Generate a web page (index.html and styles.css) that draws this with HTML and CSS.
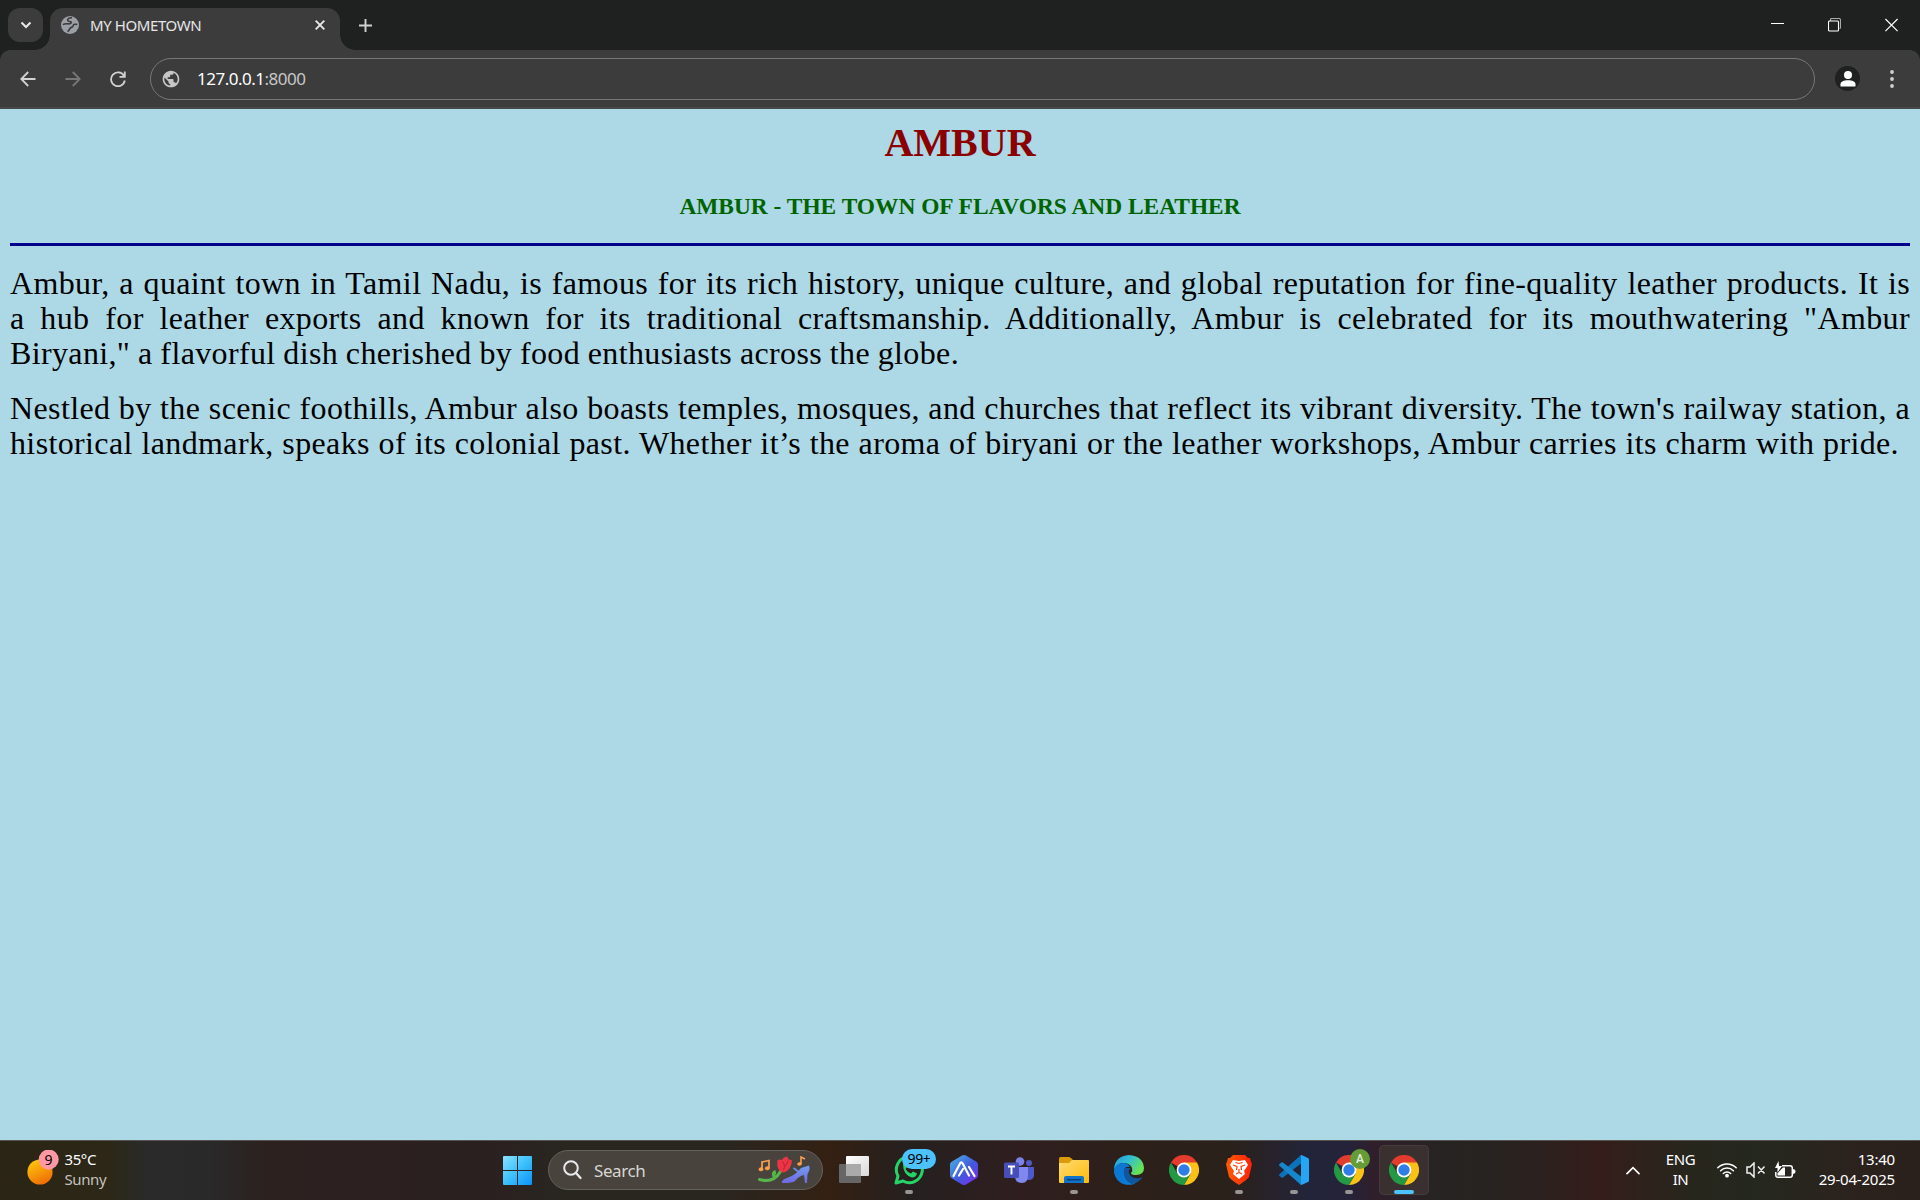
FILE: index.html
```html
<!DOCTYPE html>
<html lang="en">
<head>
<meta charset="utf-8">
<title>MY HOMETOWN</title>
<link rel="stylesheet" href="styles.css">
</head>
<body>
<svg class="defs" width="0" height="0" aria-hidden="true">
  <defs>
    <linearGradient id="sun" x1="0.2" y1="0" x2="0.7" y2="1"><stop offset="0" stop-color="#ffc90a"/><stop offset="1" stop-color="#ee6a06"/></linearGradient>
    <linearGradient id="win" x1="0" y1="0" x2="1" y2="1"><stop offset="0" stop-color="#8be3ff"/><stop offset="0.5" stop-color="#3cc0fc"/><stop offset="1" stop-color="#0a93fa"/></linearGradient>
    <linearGradient id="hex" x1="0" y1="0" x2="1" y2="1"><stop offset="0.1" stop-color="#4aa5e2"/><stop offset="0.55" stop-color="#4258dd"/><stop offset="1" stop-color="#8426f0"/></linearGradient>
    <linearGradient id="folder" x1="0" y1="0" x2="1" y2="1"><stop offset="0" stop-color="#ffdc72"/><stop offset="1" stop-color="#ffb90b"/></linearGradient>
    <linearGradient id="edgeTop" x1="0" y1="0" x2="1" y2="0.5"><stop offset="0" stop-color="#2497dd"/><stop offset="0.5" stop-color="#30bfd2"/><stop offset="1" stop-color="#68e254"/></linearGradient>
    <linearGradient id="brave" x1="0" y1="0" x2="1" y2="0"><stop offset="0" stop-color="#ff5a05"/><stop offset="1" stop-color="#ff2108"/></linearGradient>
    <linearGradient id="front" x1="0" y1="0" x2="1" y2="1"><stop offset="0" stop-color="#fff"/><stop offset="1" stop-color="#d8d8d8"/></linearGradient>
    <linearGradient id="shoe" x1="0" y1="0" x2="0" y2="1"><stop offset="0" stop-color="#759cf0"/><stop offset="1" stop-color="#7069e2"/></linearGradient>
    <symbol id="chrome" viewBox="0 0 30 30">
      <path fill="#e33b2e" d="M15 15 2 7.5A15 15 0 0 1 28 7.5Z"/>
      <path fill="#249945" d="M15 15 15 30A15 15 0 0 1 2 7.5L8.5 18.7Z"/>
      <path fill="#fbc116" d="M15 7.5H28A15 15 0 0 1 15 30L21.5 18.7Z"/>
      <path fill="#249945" d="M8.5 18.7 15 15 21.5 18.7 15 30Z"/>
      <circle cx="15" cy="15" r="7.4" fill="#fff"/><circle cx="15" cy="15" r="5.7" fill="#2f7de9"/>
    </symbol>
    <symbol id="globe" viewBox="0 0 24 24">
      <path fill="currentColor" d="M12 2C6.48 2 2 6.48 2 12s4.48 10 10 10 10-4.48 10-10S17.52 2 12 2zm-1 17.93c-3.95-.49-7-3.85-7-7.93 0-.62.08-1.21.21-1.79L9 15v1c0 1.1.9 2 2 2v1.93zm6.9-2.54c-.26-.81-1-1.39-1.9-1.39h-1v-3c0-.55-.45-1-1-1H8v-2h2c.55 0 1-.45 1-1V7h2c1.1 0 2-.9 2-2v-.41c2.93 1.19 5 4.06 5 7.41 0 2.08-.8 3.97-2.1 5.39z"/>
    </symbol>
  </defs>
</svg>

<header class="tabstrip">
  <button class="tab-search"><svg width="12" height="8" viewBox="0 0 12 8"><path d="M1.5 1.5 6 6l4.5-4.5" fill="none" stroke="#e8e8e8" stroke-width="2"/></svg></button>
  <div class="tab">
    <svg class="favicon" width="18" height="18" viewBox="0 0 18 18"><circle cx="9" cy="9" r="9" fill="#9aa0a6"/><path d="M11 1.800C7.500 1.600 6 3.200 6.800 4.600s3.400.4 3.500 1.700-1.600 1.700-3.500 1.500-3.500 0-5 .8M16.300 8.500c-2-.6-3.700-.2-4 .9S11.700 11.300 10 11.600 9 14 6.500 15.700" fill="none" stroke="#3c3c3c" stroke-width="1.600"/></svg>
    <span class="tab-title">MY HOMETOWN</span>
    <svg width="10" height="10" viewBox="0 0 10 10"><path d="M.7.7l8.6 8.6M9.3.7.7 9.3" stroke="#e8e8e8" stroke-width="1.9"/></svg>
  </div>
  <svg class="new-tab" width="13" height="13" viewBox="0 0 13 13"><path d="M6.5 0v13M0 6.5h13" stroke="#d0d0d0" stroke-width="1.9"/></svg>
  <div class="window-controls">
    <svg width="13" height="14" viewBox="0 0 13 14"><path d="M0 5.5h13" stroke="#fff"/></svg>
    <svg width="13" height="14" viewBox="0 0 13 14"><path d="M2.5 3V1.5q0-1 1-1H11q1.500 0 1.500 1.500v7.500q0 1-1 1" fill="none" stroke="#aaa" stroke-width="1.100"/><rect x=".5" y="3" width="10" height="10" rx="1" fill="none" stroke="#fff" stroke-width="1.100"/></svg>
    <svg width="13" height="14" viewBox="0 0 13 14"><path d="M.4 1l12.200 12.200M12.600 1 .4 13.200" stroke="#fff" stroke-width="1.200"/></svg>
  </div>
</header>

<nav class="toolbar">
  <svg class="nav-icon" width="16" height="16" viewBox="0 0 16 16"><path d="M15.500 8H1.500M8.200 1 1.300 8l6.900 7" fill="none" stroke="#d2d2d2" stroke-width="1.800"/></svg>
  <svg class="nav-icon" width="16" height="16" viewBox="0 0 16 16"><path d="M.5 8h14M7.800 1l6.900 7-6.900 7" fill="none" stroke="#777" stroke-width="1.800"/></svg>
  <svg class="nav-icon" width="16" height="16" viewBox="0 0 16 16"><path d="M13.900 4.700A6.900 6.900 0 1 0 14.800 9.500M14.800.6v5.200H9.500" fill="none" stroke="#d2d2d2" stroke-width="1.800"/></svg>
  <div class="address"><svg width="20" height="20"><use href="#globe"/></svg><span class="url">127.0.0.1<span class="port">:8000</span></span></div>
  <div class="profile"><svg width="16" height="16" viewBox="0 0 16 16"><circle cx="8" cy="4" r="4" fill="#fff"/><path d="M.5 15.500v-2.300C.5 10.500 4 9.300 8 9.300s7.500 1.200 7.500 3.900v2.300z" fill="#fff"/></svg></div>
  <svg class="menu" width="4" height="18" viewBox="0 0 4 18"><g fill="#d0d0d0"><circle cx="2" cy="2" r="1.900"/><circle cx="2" cy="9" r="1.900"/><circle cx="2" cy="16" r="1.900"/></g></svg>
</nav>

<main class="page">
  <h1>AMBUR</h1>
  <h3>AMBUR - THE TOWN OF FLAVORS AND LEATHER</h3>
  <hr>
  <p>
    <span class="line">Ambur, a quaint town in Tamil Nadu, is famous for its rich history, unique culture, and global reputation for fine-quality leather products. It is</span>
    <span class="line">a hub for leather exports and known for its traditional craftsmanship. Additionally, Ambur is celebrated for its mouthwatering "Ambur</span>
    <span class="line short">Biryani," a flavorful dish cherished by food enthusiasts across the globe.</span>
  </p>
  <p>
    <span class="line">Nestled by the scenic foothills, Ambur also boasts temples, mosques, and churches that reflect its vibrant diversity. The town's railway station, a</span>
    <span class="line last">historical landmark, speaks of its colonial past. Whether it’s the aroma of biryani or the leather workshops, Ambur carries its charm with pride.</span>
  </p>
</main>

<footer class="taskbar">
  <div class="weather">
    <svg width="32" height="36" viewBox="0 0 32 36"><circle cx="13" cy="22" r="12.600" fill="url(#sun)"/><circle cx="21.700" cy="9.500" r="10" fill="#ff98a5"/><text class="weather-count" x="21.500" y="14.500">9</text></svg>
    <div class="weather-text"><span>35°C</span><span class="muted">Sunny</span></div>
  </div>
  <div class="start"><svg width="29" height="29" viewBox="0 0 29 29"><path fill="url(#win)" d="M1 0h13v14H0V1q0-1 1-1ZM15 0h13q1 0 1 1v13H15ZM0 15h14v14H1q-1 0-1-1ZM15 15h14v13q0 1-1 1H15Z"/></svg></div>
  <div class="search">
    <svg width="19" height="20" viewBox="0 0 19 20"><circle cx="8" cy="8" r="6.800" fill="none" stroke="#e9e9ec" stroke-width="2"/><path d="M13 13l4.500 5" stroke="#e9e9ec" stroke-width="2.300" stroke-linecap="round"/></svg>
    <span class="search-label">Search</span>
    <svg width="53" height="28" viewBox="0 0 53 28">
      <g fill="#fba04c" stroke="#fba04c"><path d="M4 13V6l7-1.500V12" fill="none" stroke-width="1.700"/><ellipse cx="3" cy="13.300" rx="2" ry="1.500"/><ellipse cx="9.300" cy="12.300" rx="2" ry="1.500"/><path d="M43 8V1l4 2" fill="none" stroke-width="1.600"/><ellipse cx="41.500" cy="8" rx="1.800" ry="1.300"/></g>
      <path d="M1.500 23.500q14 4 21-8" fill="none" stroke="#58b54a" stroke-width="3" stroke-linecap="round"/>
      <path d="M15 22q-3-6 2-8 3 3-2 8Z" fill="#54b948"/>
      <path d="M19.500 4q2-1 4.500 0 1-3 5-3.500 1.500 1.500 1.500 3 1.500-.5 3.500 1-.2 4-2 7-3 5-7.500 5Q18 14 19.500 4Z" fill="#eb3544"/><path d="M24 5q4 4 1.500 9M30 4.500q-.5 4-3.500 6" fill="none" stroke="#c01f3a" stroke-width="1"/>
      <path d="M24 27q-1-3 5-5 9-3 14-10l8-2.500q1.500 4-1.500 8.500l-.5 9h-2l-1-8q-5 1-9 6-2 2-13 2Z" fill="url(#shoe)"/><path d="M35.500 12l8 6" stroke="#6e8be9" stroke-width="2"/>
    </svg>
  </div>
  <div class="apps">
    <div class="app"><svg width="30" height="30" viewBox="0 0 30 30"><rect x="0" y="9" width="22" height="19" rx="1" fill="#666"/><rect x="7" y="1" width="23" height="20" rx="1" fill="url(#front)"/><path d="M7 9h15v12H7z" fill="#aaa"/></svg></div>
    <div class="app running"><svg width="30" height="30" viewBox="0 0 30 30"><path d="M2 28l2-7A13 13 0 1 1 9 26Z" fill="none" stroke="#25d366" stroke-width="3" stroke-linejoin="round"/><path d="M9 9q2-2 3 0l1 3-1.500 2q2 3.500 5.500 4.500l2-2 4 2q-1 4-5 4Q9 20 9 9Z" fill="#25d366"/></svg><span class="badge">99+</span></div>
    <div class="app"><svg width="28" height="30" viewBox="0 0 28 30"><path d="M12 .6q2-1 4 0l10 6q2 1 2 3v11q0 2-2 3l-10 6q-2 1-4 0l-10-6q-2-1-2-3v-11q0-2 2-3Z" fill="url(#hex)"/><path d="M3.500 21 10 8.500q1.200-2.500 2.700 0L19 20.500M9 20.500l4-6.500M19 12l5.500 9" fill="none" stroke="#fff" stroke-width="2.200" stroke-linecap="round" stroke-linejoin="round"/></svg></div>
    <div class="app"><svg width="30" height="30" viewBox="0 0 30 30"><circle cx="25" cy="8" r="3" fill="#5059c9"/><path d="M20 12h10v8q0 4-4 5h-4Z" fill="#5059c9"/><circle cx="16" cy="6.500" r="4.300" fill="#7b83eb"/><path d="M11 12h13v8q0 8-6 8-7 0-7-7Z" fill="#8087ee"/><rect x="0" y="7.500" width="15" height="15.500" rx="1.500" fill="#464eb8"/><path d="M4 11.500h7M7.500 11v8.500" stroke="#fff" stroke-width="1.900"/></svg></div>
    <div class="app running"><svg width="30" height="30" viewBox="0 0 30 30"><path d="M0 9V3.500Q0 2 1.500 2H10q1 0 2.500 1.500L14 5v4Z" fill="#dc9b08"/><path d="M0 8h10l3-3h16q1 0 1 1v21q0 1-1 1H1q-1 0-1-1Z" fill="url(#folder)"/><path d="M5 28v-5q0-2 2-2h16q2 0 2 2v5Z" fill="#0f73c8"/><path d="M8 24.700h14" stroke="#063f7c" stroke-width="1.500"/></svg></div>
    <div class="app"><svg width="30" height="30" viewBox="0 0 30 30"><path d="M0 15A15 15 0 0 0 20 29L26 24Q15 25 12 17Q10 8 2 8Z" fill="#0c7fd5"/><path d="M10 13Q8 25 18 29 24 28 28 23q.5-1-.7-.6Q20 25 16 20q-3-4 1-7Z" fill="#11559e"/><path d="M0 14Q1 1 15 0 29 1 30 13q0 7-8 7-5 0-5-2 2-2 1-5-2-5-9-5-6 0-9 6Z" fill="url(#edgeTop)"/><path d="M0 15q2-7 9-7 5 0 7 4-5-1-7 4-2 7 4 13.700Q1 28 0 15Z" fill="#0b78d3"/></svg></div>
    <div class="app"><svg width="30" height="30"><use href="#chrome"/></svg></div>
    <div class="app running"><svg width="26" height="30" viewBox="0 0 26 30"><path d="M7 0h12l3 3h2l1 4 1 2-3 13q-1 2-10 8Q4 24 3 22L0 9l1-2 1-4h2Z" fill="url(#brave)"/><path d="M7 5l6 1 6-1 3 5-4 6 1 3-6 5-6-5 1-3-4-6Z" fill="#fff"/><path d="M7 10l4 1.500-.5 3.500M19 10l-4 1.500.500 3.500M13 14v4M10 19l3-1.500 3 1.500M9.500 7.500l3.500 1 3.500-1" fill="none" stroke="#fc3d0c" stroke-width="1.200"/></svg></div>
    <div class="app running"><svg width="30" height="30" viewBox="0 0 30 30"><path d="M22 0v8.500L4 22.500q-1 .6-2-.2l-1.600-1.500q-.8-.8 0-1.600Z" fill="#0c73b9"/><path d="M22 30v-8.500L4 7.500q-1-.6-2 .2L.4 9.200q-.8.8 0 1.600Z" fill="#1686cd"/><path d="M21.500.300Q22 0 23 .200L29 3q1 .5 1 1.500v21q0 1-1 1.500l-6 2.800q-1 .2-1.500-.3l.500-1V1Z" fill="#25a5f3"/></svg></div>
    <div class="app running"><svg width="30" height="30"><use href="#chrome"/></svg><span class="avatar">A</span></div>
    <div class="app running active"><svg width="30" height="30"><use href="#chrome"/></svg></div>
  </div>
  <div class="tray">
    <svg class="chevron" width="14" height="9" viewBox="0 0 14 9"><path d="M1 7.700 7 1.700l6 6" fill="none" stroke="#fff" stroke-width="1.700" stroke-linecap="round"/></svg>
    <div class="lang"><span>ENG</span><span>IN</span></div>
    <div class="status">
      <svg width="20" height="16" viewBox="0 0 20 16"><g fill="none" stroke="#fff" stroke-width="1.500" stroke-linecap="round"><path d="M.8 5.800a13 13 0 0 1 18.400 0"/><path d="M3.600 8.700a9 9 0 0 1 12.800 0"/><path d="M6.300 11.500a5.200 5.200 0 0 1 7.400 0"/></g><circle cx="10" cy="13.700" r="1.900" fill="#fff"/></svg>
      <svg width="20" height="16" viewBox="0 0 20 16"><path d="M1 5h3l4-4v14l-4-4H1ZM12 4.500l6.500 7M18.500 4.500l-6.500 7" fill="none" stroke="#f0f0f0" stroke-width="1.500"/></svg>
      <svg width="21" height="18" viewBox="0 0 21 18"><path d="M7 4.700h8q2.300 0 2.300 2.300v7q0 2.300-2.300 2.300H3Q.8 16.300.8 14v-3" fill="none" stroke="#fff" stroke-width="1.500"/><path d="M18.500 8.500q1.500 0 1.500 2t-1.500 2Z" fill="#fff" stroke="#fff"/><path d="M3.500 0 0 7h2.500v4.500L7 5H4Z" fill="#fff"/><path d="M2.500 14.500v-2.200L8 6.500h2v8Z" fill="#fff"/></svg>
    </div>
    <div class="clock"><span>13:40</span><span>29-04-2025</span></div>
  </div>
</footer>
</body>
</html>
```
FILE: styles.css
```css
* { box-sizing: border-box; }

body {
  margin: 0;
  width: 1920px;
  height: 1200px;
  overflow: hidden;
  display: flex;
  flex-direction: column;
  background: #add8e6;
  font-family: "Noto Sans", "Open Sans", sans-serif;
}

svg { display: block; flex: none; }
.defs { position: absolute; }

/* Tab strip */
.tabstrip {
  height: 50px;
  flex: none;
  display: flex;
  align-items: flex-start;
  padding: 8px 0 0 8px;
  background: #1f2120;
}
.tab-search {
  width: 35px;
  height: 34px;
  padding: 0 0 1px;
  border: 0;
  border-radius: 12px;
  background: #3c3c3c;
  display: grid;
  place-items: center;
}
.tab {
  position: relative;
  width: 290px;
  height: 42px;
  margin-left: 7px;
  padding: 0 15px 8px 11px;
  border-radius: 13px 13px 0 0;
  background: #3c3c3c;
  display: flex;
  align-items: center;
}
.tab::before, .tab::after {
  content: "";
  position: absolute;
  bottom: 0;
  width: 15px;
  height: 15px;
}
.tab::before { left: -15px; background: radial-gradient(circle at 0 0, transparent 14.5px, #3c3c3c 15px); }
.tab::after { right: -15px; background: radial-gradient(circle at 100% 0, transparent 14.5px, #3c3c3c 15px); }
.tab-title {
  flex: 1;
  margin-left: 11px;
  padding-bottom: 1px;
  font-size: 15px;
  line-height: 20px;
  letter-spacing: -0.4px;
  color: #e6e6e6;
}
.new-tab { margin: 10.5px 0 0 19px; }
.window-controls {
  margin-left: auto;
  padding: 10px 22px 0 0;
  display: flex;
  gap: 44px;
}

/* Toolbar */
.toolbar {
  height: 59px;
  flex: none;
  display: flex;
  align-items: center;
  padding: 0 26px 2px 20px;
  background: linear-gradient(#3c3c3c, #3c3c3c) 0 0 / 100% 57px no-repeat, #484848;
  position: relative;
}
.toolbar::before, .toolbar::after {
  content: "";
  position: absolute;
  top: 0;
  width: 10px;
  height: 10px;
}
.toolbar::before { left: 0; background: radial-gradient(circle at 100% 100%, transparent 9.5px, #1f2120 10px); }
.toolbar::after { right: 0; background: radial-gradient(circle at 0 100%, transparent 9.5px, #1f2120 10px); }
.nav-icon { margin-right: 29px; }
.nav-icon + .nav-icon + .nav-icon { margin-right: 24px; }
.address {
  flex: 1;
  height: 42px;
  margin-top: 1px;
  padding: 0 0 1px 10px;
  border: 1px solid #777;
  border-radius: 21px;
  display: flex;
  align-items: center;
  color: #c7c7c7;
}
.url {
  margin-left: 16px;
  font-size: 17px;
  letter-spacing: -0.5px;
  color: #fff;
}
.port { color: #c7c7c7; }
.profile {
  width: 25px;
  height: 25px;
  margin: 0 30px 0 20px;
  border-radius: 50%;
  background: #1f2120;
  display: grid;
  place-items: center;
}

/* Page content */
.page {
  flex: 1;
  padding: 11px 10px 0;
  font-family: "Liberation Serif", serif;
}
h1 {
  margin: 0;
  font-size: 40px;
  line-height: 46px;
  text-align: center;
  color: #8b0000;
}
h3 {
  margin: 27px 0 23px;
  font-size: 23.4px;
  line-height: 27px;
  text-align: center;
  color: #006400;
}
hr {
  height: 3px;
  margin: 0;
  border: 0;
  background: #00008b;
}
p {
  margin: 20px 0;
  font-size: 32px;
  line-height: 35px;
  letter-spacing: 0.37px;
  color: #000;
}
.line {
  display: block;
  white-space: nowrap;
  text-align-last: justify;
}
.short { width: 949px; letter-spacing: 0.36px; word-spacing: -0.8px; }
.last { width: 1889px; }

/* Taskbar */
.taskbar {
  height: 60px;
  flex: none;
  display: flex;
  align-items: center;
  box-shadow: inset 0 1px #56544f;
  color: #fff;
  background: linear-gradient(90deg, #2b2516 0, #2c2717 110px, #292a29 145px, #292929 210px, #2c211f 265px, #2b2020 490px, #292620 560px, #292620 720px, #342013 830px, #25201f 910px, #301e1f 1020px, #2c2019 1130px, #2b211b 1230px, #22243a 1310px, #24233a 1345px, #301f2b 1375px, #252421 1450px, #2b211e 1540px, #351d1a 1600px, #27261d 1690px, #25281e 1760px, #2c221d 1860px, #2b211c 1920px);
}
.weather {
  width: 490px;
  padding-left: 27px;
  display: flex;
  align-items: center;
}
.weather svg { margin-top: -5px; }
.weather-count { font-size: 14px; fill: #000; text-anchor: middle; }
.weather-text, .lang, .clock {
  display: flex;
  flex-direction: column;
  padding-bottom: 3px;
  font-size: 15px;
  line-height: 20px;
  letter-spacing: -0.4px;
}
.weather-text { margin-left: 5.5px; }
.muted { color: #c4c2bd; }
.start { width: 55px; display: grid; place-items: center; margin-top: 1px; }
.search {
  width: 275px;
  height: 40px;
  margin-left: 3px;
  padding: 0 11px 0 14px;
  border: 1px solid #65615c;
  border-radius: 20px;
  background: #48433d;
  display: flex;
  align-items: center;
}
.search-label {
  flex: 1;
  margin-left: 12px;
  font-size: 17px;
  letter-spacing: -0.4px;
  color: #d8d6d3;
}
.apps { display: flex; margin-left: 3.5px; }
.app {
  position: relative;
  width: 50px;
  height: 50px;
  margin: 0 2.5px;
  border-radius: 5px;
  display: grid;
  place-items: center;
}
.app.active { background: #39302f; box-shadow: inset 0 0 0 1px #453c3b; }
.running::after {
  content: "";
  position: absolute;
  left: 21px;
  bottom: 1px;
  width: 8px;
  height: 4px;
  border-radius: 2px;
  background: #989494;
}
.active.running::after { left: 15px; width: 20px; background: #4cc2ff; }
.badge {
  position: absolute;
  left: 18px;
  top: 4px;
  width: 34px;
  height: 20px;
  border-radius: 10px;
  background: #4cc2ff;
  color: #000;
  font-size: 14px;
  line-height: 20px;
  letter-spacing: -0.3px;
  text-align: center;
}
.avatar {
  position: absolute;
  left: 26px;
  top: 4px;
  width: 20px;
  height: 20px;
  border-radius: 50%;
  background: #669c38;
  color: #e8f0e0;
  font: 500 12px/20px Roboto, sans-serif;
  text-align: center;
}
.tray {
  margin-left: auto;
  padding-right: 25px;
  display: flex;
  align-items: center;
}
.lang { margin-left: 25px; width: 31px; align-items: center; }
.status { display: flex; align-items: center; gap: 9px; margin-left: 21px; }
.clock { width: 79px; margin-left: 20px; align-items: flex-end; white-space: nowrap; letter-spacing: -0.2px; }
```
